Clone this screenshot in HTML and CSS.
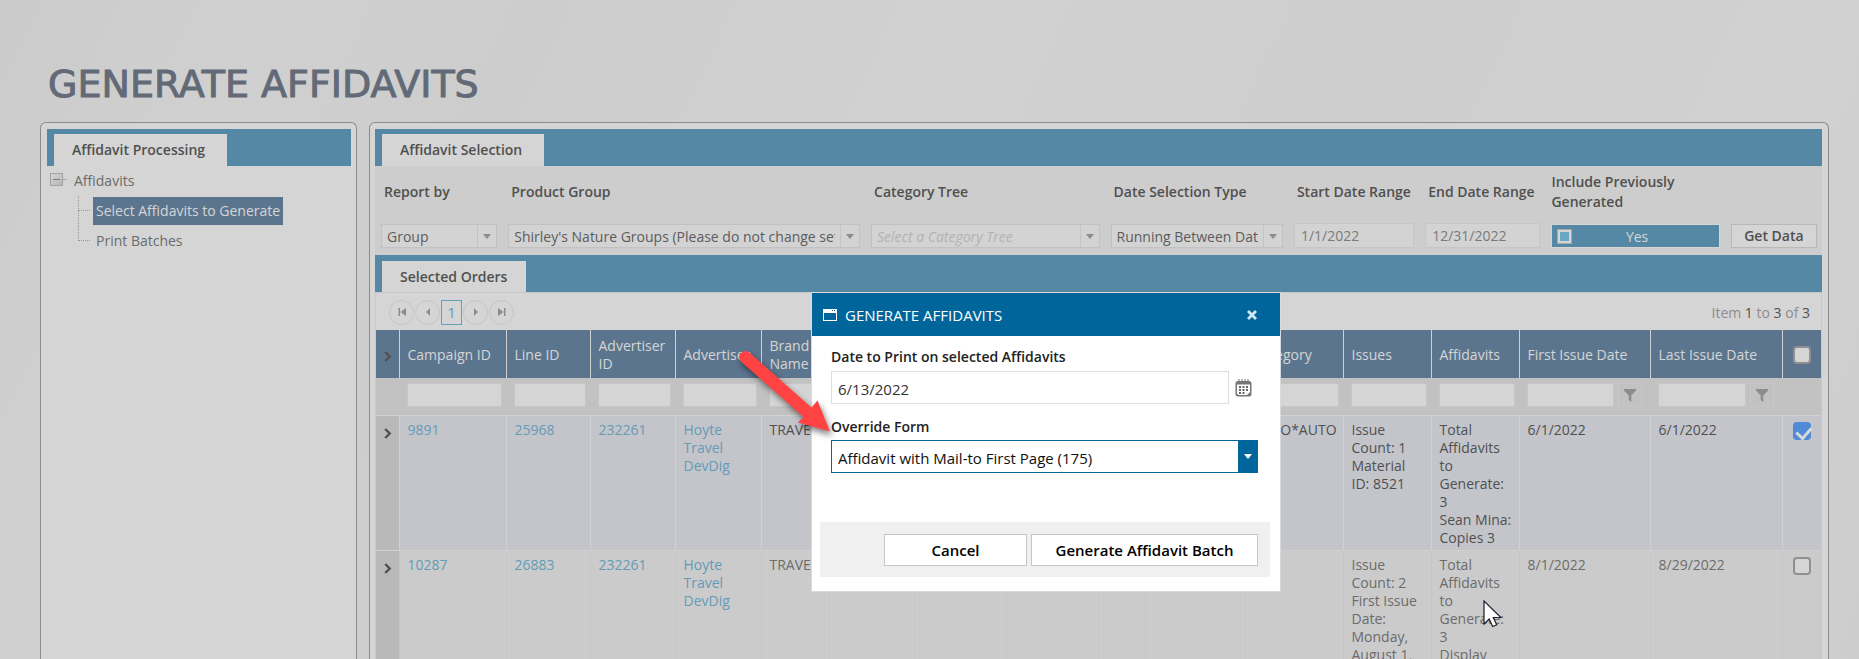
FILE: index.html
```html
<!DOCTYPE html>
<html lang="en">
<head>
<meta charset="utf-8">
<title>Generate Affidavits</title>
<link rel="stylesheet" href="styles.css">
</head>
<body>
<svg class="sprite" aria-hidden="true">
  <symbol id="caret" viewBox="0 0 8 5"><path d="M0 0h8L4 5z" fill="currentColor"/></symbol>
  <symbol id="chevron" viewBox="0 0 8 11"><path d="M1.200 1l4.500 4.500-4.500 4.500" fill="none" stroke="currentColor" stroke-width="2.400"/></symbol>
  <symbol id="funnel" viewBox="0 0 12 13"><path d="M0 0h12v1.500L7.300 6.500V13L4.700 11V6.500L0 1.500z" fill="currentColor"/></symbol>
</svg>
<main class="page">
  <h1 class="page-title">GENERATE AFFIDAVITS</h1>
  <div class="columns">
    <aside class="panel side">
      <div class="tabbar"><span class="tab">Affidavit Processing</span></div>
      <ul class="tree">
        <li class="tree-root"><button class="tree-toggle" aria-label="Collapse"></button><span class="tree-dots"></span><a href="#">Affidavits</a>
        </li>
        <li class="tree-item"><a class="selected" href="#">Select Affidavits to Generate</a></li>
        <li class="tree-item last"><a href="#">Print Batches</a></li>
      </ul>
    </aside>
    <section class="panel content">
      <div class="tabbar"><span class="tab">Affidavit Selection</span></div>
      <form class="filters">
        <div class="field"><label for="report">Report by</label>
          <div class="combo"><select id="report"><option>Group</option></select><span class="combo-btn"><svg><use href="#caret"/></svg></span></div></div>
        <div class="field"><label for="group">Product Group</label>
          <div class="combo"><select id="group"><option>Shirley's Nature Groups (Please do not change settings)</option></select><span class="combo-btn"><svg><use href="#caret"/></svg></span></div></div>
        <div class="field"><label for="cat">Category Tree</label>
          <div class="combo"><select id="cat" class="empty"><option>Select a Category Tree</option></select><span class="combo-btn"><svg><use href="#caret"/></svg></span></div></div>
        <div class="field"><label for="dtype">Date Selection Type</label>
          <div class="combo"><select id="dtype"><option>Running Between Dates</option></select><span class="combo-btn"><svg><use href="#caret"/></svg></span></div></div>
        <div class="field"><label for="start">Start Date Range</label><input class="date" id="start" value="1/1/2022"></div>
        <div class="field"><label for="end">End Date Range</label><input class="date" id="end" value="12/31/2022"></div>
        <div class="field toggle-field"><label for="prev">Include Previously Generated</label>
          <button class="toggle" id="prev" type="button"><span class="knob"></span><span class="toggle-text">Yes</span></button></div>
        <div class="field"><button class="get-data" type="button">Get Data</button></div>
      </form>
      <div class="tabbar second"><span class="tab">Selected Orders</span></div>
      <div class="grid">
        <div class="pager">
          <button aria-label="First page"><svg viewBox="0 0 8 8"><path d="M0.500 0h1.500v8h-1.500zM8 0v8L2.500 4z"/></svg></button>
          <button aria-label="Previous page"><svg viewBox="0 0 8 8"><path d="M6 0v8L2 4z"/></svg></button>
          <button class="current">1</button>
          <button aria-label="Next page"><svg viewBox="0 0 8 8"><path d="M2 0v8l4-4z"/></svg></button>
          <button aria-label="Last page"><svg viewBox="0 0 8 8"><path d="M0 0v8l5.500-4zM6 0h1.500v8H6z"/></svg></button>
          <span class="count">Item <b>1</b> to <b>3</b> of <b>3</b></span>
        </div>
        <table>
          <colgroup><col class="w23"><col class="w107"><col class="w84"><col class="w85"><col class="w86"><col class="w68"><col class="w85"><col class="w92"><col class="w92"><col class="w47"><col class="w100"><col class="w98"><col class="w88"><col class="w88"><col class="w131"><col class="w132"><col class="w39"></colgroup>
          <thead>
            <tr>
              <th class="expand"><svg><use href="#chevron"/></svg></th><th>Campaign ID</th><th>Line ID</th><th>Advertiser ID</th><th>Advertiser</th><th>Brand Name</th><th></th><th></th><th></th><th></th><th></th><th>Category</th><th>Issues</th><th>Affidavits</th><th>First Issue Date</th><th>Last Issue Date</th><th class="check"><input type="checkbox" aria-label="Select all"></th>
            </tr>
            <tr class="filter-row">
              <td></td>
              <td><input aria-label="Filter campaign"></td><td><input aria-label="Filter line"></td><td><input aria-label="Filter advertiser ID"></td><td><input aria-label="Filter advertiser"></td><td><input aria-label="Filter brand"></td>
              <td></td><td></td><td></td><td></td><td></td>
              <td><input aria-label="Filter category"></td><td><input aria-label="Filter issues"></td><td><input aria-label="Filter affidavits"></td>
              <td><div class="date-filter"><input aria-label="Filter first issue date"><button aria-label="Filter options"><svg><use href="#funnel"/></svg></button></div></td>
              <td><div class="date-filter"><input aria-label="Filter last issue date"><button aria-label="Filter options"><svg><use href="#funnel"/></svg></button></div></td>
              <td></td>
            </tr>
          </thead>
          <tbody>
            <tr class="picked">
              <td class="expand"><svg><use href="#chevron"/></svg></td><td><a href="#">9891</a></td><td><a href="#">25968</a></td><td><a href="#">232261</a></td><td><a href="#">Hoyte Travel DevDig</a></td><td>TRAVEL</td><td></td><td></td><td></td><td></td><td></td><td>AUTO*AUTO</td>
              <td>Issue<br>Count: 1<br>Material<br>ID: 8521</td><td>Total<br>Affidavits<br>to<br>Generate:<br>3<br>Sean Mina:<br>Copies 3</td><td>6/1/2022</td><td>6/1/2022</td><td class="check"><input type="checkbox" checked aria-label="Select 9891"></td>
            </tr>
            <tr>
              <td class="expand"><svg><use href="#chevron"/></svg></td><td><a href="#">10287</a></td><td><a href="#">26883</a></td><td><a href="#">232261</a></td><td><a href="#">Hoyte Travel DevDig</a></td><td>TRAVEL</td><td></td><td></td><td></td><td></td><td></td><td></td>
              <td>Issue<br>Count: 2<br>First Issue<br>Date:<br>Monday,<br>August 1,</td><td>Total<br>Affidavits<br>to<br>Generate:<br>3<br>Display</td><td>8/1/2022</td><td>8/29/2022</td><td class="check"><input type="checkbox" aria-label="Select 10287"></td>
            </tr>
          </tbody>
        </table>
      </div>
    </section>
  </div>

  <div class="dialog" role="dialog" aria-labelledby="dlg-title">
    <header class="dialog-head">
      <svg class="win" viewBox="0 0 14 12"><path d="M0 0h14v12H0zM1 4v7h12V4zM9 1v1h1V1zm2 0v1h1V1z" fill="#fff" fill-rule="evenodd"/></svg>
      <h2 id="dlg-title">GENERATE AFFIDAVITS</h2>
      <button class="close" aria-label="Close"><svg viewBox="0 0 10 10"><path d="M1 1l8 8M9 1L1 9" stroke="#cfe6f5" stroke-width="2.800"/></svg></button>
    </header>
    <div class="dialog-body">
      <label for="print-date">Date to Print on selected Affidavits</label>
      <div class="date-line"><input id="print-date" value="6/13/2022">
        <button class="cal" aria-label="Open calendar"><svg viewBox="0 0 17 18"><path d="M3 2h11a2.500 2.500 0 0 1 2.500 2.500V15A2.500 2.500 0 0 1 14 17.500H3A2.500 2.500 0 0 1 .5 15V4.500A2.500 2.500 0 0 1 3 2z" fill="#777"/><path d="M2 5.500h13V13l-3 3H3.500L2 14.500z" fill="#fff"/><path d="M4 0v3M7 0v3M10 0v3M13 0v3" stroke="#777"/><path d="M4 7h2v2H4zM7.500 7h2v2h-2zM11 7h2v2h-2zM4 10h2v2H4zM7.500 10h2v2h-2zM11 10h2v2h-2zM4 13h2v2H4zM7.500 13h2v2h-2z" fill="#666"/></svg></button>
      </div>
      <label for="override">Override Form</label>
      <div class="form-combo"><select id="override"><option>Affidavit with Mail-to First Page (175)</option></select><span class="form-btn"><svg><use href="#caret"/></svg></span></div>
    </div>
    <footer class="dialog-foot"><button class="cancel">Cancel</button><button class="go">Generate Affidavit Batch</button></footer>
  </div>

  <svg class="arrow" viewBox="0 0 110 100" aria-hidden="true"><path d="M14 11Q18 7 23 11L84.500 65.500 90.500 58.500 103 89.500 71 80.500 76.500 75 14.500 20Q10.500 15.500 14 11z" fill="#ff4343"/></svg>
  <svg class="cursor" viewBox="0 0 19 28" aria-hidden="true"><path d="M1 1v23l5.200-5 3.500 7.500 4-1.800-3.400-7.200H18z" fill="#fff" stroke="#1c1c2c" stroke-width="1.200"/></svg>
</main>
</body>
</html>
```

FILE: styles.css
```css
* { box-sizing: border-box; }
body { margin: 0; font-family: "Open Sans", "Noto Sans", sans-serif; font-size: 14px; color: #6c6c6c; }
button, input, select { font: inherit; color: inherit; }
button { cursor: pointer; }
a { text-decoration: none; color: inherit; }
.sprite { display: none; }

.page {
  position: relative;
  height: 100vh;
  overflow: hidden;
  display: flex;
  flex-direction: column;
  padding: 60px 30px 0 40px;
  background: linear-gradient(115deg, #cbcbcb, #d0d0d0 12%, #cdcdcd 25%, #d1d1d1 45%, #cecece 65%, #d1d1d1 85%, #cdcdcd);
}
.page-title {
  margin: 0 0 14px 8px;
  font-family: "DejaVu Sans", sans-serif;
  font-size: 38px;
  line-height: 48px;
  font-weight: 400;
  color: #636a77;
  -webkit-text-stroke: 1px #636a77;
}
.columns { flex: 1; min-height: 0; display: flex; gap: 12px; }
.panel { border: 1px solid #8c8c8c; border-bottom: 0; border-radius: 6px 6px 0 0; background: #d5d5d5; padding: 6px 6px 0; overflow: hidden; }
.side { width: 317px; flex: none; padding-right: 5px; }
.content { flex: 1; min-width: 0; padding-left: 5px; }

.tabbar { display: flex; align-items: flex-end; height: 37px; padding-left: 7px; background: #5588a4; }
.tab { height: 32px; padding: 0 22px 0 18px; line-height: 32px; font-weight: 600; color: #505050; background: #d5d5d5; }
.second .tab { height: 31px; padding-right: 19px; }

.tree { list-style: none; margin: 0; padding: 0 0 0 3px; }
.tree-root { display: flex; align-items: center; height: 30px; }
.tree-root a { padding-bottom: 2px; }
.tree-toggle { width: 13px; height: 13px; padding: 0; margin-bottom: 4px; border: 1px solid #a2a2a2; background: linear-gradient(#7a7a7a, #7a7a7a) center / 7px 1px no-repeat, linear-gradient(135deg, #d8d8d8, #b4b4b4); }
.tree-dots { width: 4px; margin: 0 7px 4px 0; border-top: 1px dotted #999; }
.tree-item { position: relative; display: flex; align-items: center; height: 30px; padding-left: 43px; }
.tree-item::before { content: ""; position: absolute; left: 28px; top: 0; width: 11px; height: 14px; border: 1px dotted #999; border-width: 0 0 1px 1px; }
.tree-item:not(.last)::after { content: ""; position: absolute; left: 28px; top: 14px; height: 16px; border-left: 1px dotted #999; }
.tree-item a { padding: 0 3px; line-height: 28px; }
.tree-item a.selected { background: #5c758e; color: #d5d5d5; }

.filters { display: grid; grid-template-columns: 116fr 351fr 228fr 172fr 120fr 115fr 168fr 86fr; column-gap: 11px; height: 89px; padding: 0 5px 0 6px; background: #cdcdcd; }
.field { display: flex; flex-direction: column; justify-content: flex-end; min-width: 0; padding-bottom: 7px; }
.field label { flex: 1; display: flex; align-items: center; padding: 0 0 6px 3px; font-weight: 600; line-height: 20px; color: #505050; white-space: nowrap; }
.toggle-field label { padding-left: 0; padding-bottom: 6px; white-space: normal; }
.combo { position: relative; display: flex; height: 24px; border: 1px solid #c2c2c2; background: #d3d3d3; }
.combo select { flex: 1; min-width: 0; padding: 0 24px 0 5px; border: 0; appearance: none; background: none; color: #5c5c5c; }
.combo select.empty { font-style: italic; color: #b2b2b2; }
.combo-btn { position: absolute; right: 0; top: 0; bottom: 0; width: 19px; display: flex; align-items: center; justify-content: center; border-left: 1px solid #c2c2c2; color: #8c8c8c; pointer-events: none; }
.combo-btn svg, .form-btn svg { width: 8px; height: 5px; }
.date { width: 100%; height: 25px; padding: 0 6px; border: 1px solid #c6c6c6; background: #d3d3d3; color: #7a7a7a; }
.toggle { display: flex; align-items: center; height: 24px; padding: 0 5px; border: 1px solid #d5d5d5; background: #5588a4; color: #d5d5d5; }
.knob { width: 15px; height: 15px; border: 3px solid #d5d5d5; outline: 1px solid #a8a8a8; outline-offset: -1px; background: #6aa7c7; }
.toggle-text { flex: 1; padding-right: 12px; text-align: center; }
.get-data { height: 24px; padding: 0; border: 1px solid #b8b8b8; background: #d5d5d5; font-weight: 600; line-height: 22px; color: #505050; }

.grid { border: 1px solid #c8c8c8; border-bottom: 0; }
.pager { display: flex; align-items: center; height: 37px; padding: 1px 11px 0 13px; gap: 1px; }
.pager button { display: flex; align-items: center; justify-content: center; width: 25px; height: 25px; padding: 0; border: 1px solid #c5c5c5; border-radius: 50%; background: none; }
.pager svg { width: 8px; height: 8px; fill: #8c8c8c; }
.pager .current { width: 21px; border-color: #65a1bd; border-radius: 0; color: #5f9cb9; font-size: 15px; }
.count { margin-left: auto; color: #8c8c8c; }
.count b { font-weight: 400; color: #505050; }

table { width: 100%; table-layout: fixed; border-collapse: collapse; line-height: 18px; }
.w23 { width: 23px; } .w107 { width: 107px; } .w84 { width: 84px; } .w85 { width: 85px; } .w86 { width: 86px; }
.w68 { width: 68px; } .w92 { width: 92px; } .w47 { width: 47px; } .w100 { width: 100px; } .w98 { width: 98px; }
.w88 { width: 88px; } .w131 { width: 131px; } .w132 { width: 132px; } .w39 { width: 39px; }
th { height: 48px; padding: 2px 8px 0; border-left: 1px solid #d0d0d0; background: #5c758e; color: #d5d5d5; font-weight: 400; text-align: left; vertical-align: middle; }
td { padding: 5px 4px 3px 8px; vertical-align: top; }
tbody td { border-left: 1px solid #c6c6c6; border-top: 1px solid #d0d0d0; background: #cbcbcb; }
.picked td { height: 135px; border-color: #d2d2d2; background: #c4c5cb; color: #505050; }
tbody a { color: #649bb6; }
th.expand, td.expand { padding: 0 0 0 8px; border-left: 0; }
th.expand { padding-top: 4px; }
tbody td.expand { padding-top: 12px; background: #b9b9b9; }
.expand svg { display: block; width: 8px; height: 11px; color: #505050; }
.filter-row td { height: 37px; padding: 5px 4px 0 8px; background: #c2c2c2; }
.filter-row input { display: block; width: 100%; height: 24px; padding: 0 4px; border: 1px solid #c6c6c6; background: #d5d5d5; }
.date-filter { display: flex; gap: 4px; padding-right: 4px; }
.date-filter input { flex: 1; min-width: 0; }
.date-filter button { width: 24px; height: 24px; padding: 0; border: 1px solid #c8c8c8; background: none; color: #8c8c8c; }
.date-filter svg { display: block; width: 12px; height: 13px; margin: 0 auto; }
th.check, td.check { padding: 6px 0 0; text-align: center; }
th.check { padding: 2px 0 0; }
.check input { appearance: none; display: inline-block; width: 18px; height: 18px; margin: 0; border: 2px solid #909090; border-radius: 4px; background: #d5d5d5; vertical-align: top; }
.check input:checked { border-color: #4f8bd6; background: #4f8bd6; position: relative; }
.check input:checked::after { content: ""; position: absolute; left: 4px; top: 0; width: 7px; height: 12px; border: solid #d8d8d8; border-width: 0 3px 3px 0; transform: rotate(42deg); }

.dialog { position: absolute; left: 811px; top: 292px; width: 470px; border: 1px solid #d8dade; background: #fff; color: #2b2b2b; font-size: 15px; }
.dialog-head { display: flex; align-items: center; height: 43px; padding: 0 20px 0 11px; background: #00659b; color: #fff; }
.win { width: 14px; height: 12px; margin-right: 8px; }
.dialog-head h2 { margin: 0 auto 0 0; font-size: 15px; font-weight: 400; }
.close { padding: 3px; border: 0; background: none; }
.close svg { display: block; width: 10px; height: 10px; }
.dialog-body { padding: 10px 22px 49px 19px; }
.dialog-body label { display: block; font-size: 14px; font-weight: 600; line-height: 22px; color: #222; }
.date-line { display: flex; align-items: center; gap: 6px; margin: 3px 0 12px; }
.date-line input { flex: 1; height: 33px; padding: 3px 6px 0; border: 1px solid #ddd; background: #fff; color: #333; }
.cal { margin-right: 6px; padding: 0; border: 0; background: none; }
.cal svg { display: block; width: 17px; height: 18px; }
.form-combo { display: flex; position: relative; height: 33px; margin-top: 2px; border: 1px solid #00659b; }
.form-combo select { flex: 1; padding: 3px 24px 0 6px; border: 0; appearance: none; background: none; color: #111; }
.form-btn { position: absolute; right: 0; top: 0; bottom: 0; width: 19px; display: flex; align-items: center; justify-content: center; background: #00659b; color: #fff; pointer-events: none; }
.dialog-foot { display: flex; justify-content: flex-end; gap: 4px; margin: 0 10px 14px 8px; padding: 12px 12px 11px; background: #f0f0f0; }
.dialog-foot button { height: 32px; padding: 0; border: 1px solid #c6c6c6; background: #fff; color: #000; font-weight: 600; }
.cancel { width: 143px; }
.go { width: 227px; }

.arrow { position: absolute; left: 727px; top: 342px; width: 110px; height: 100px; filter: drop-shadow(2px 4px 3px rgba(0, 0, 0, .5)); }
.cursor { position: absolute; left: 1483px; top: 600px; width: 19px; height: 28px; }
```
